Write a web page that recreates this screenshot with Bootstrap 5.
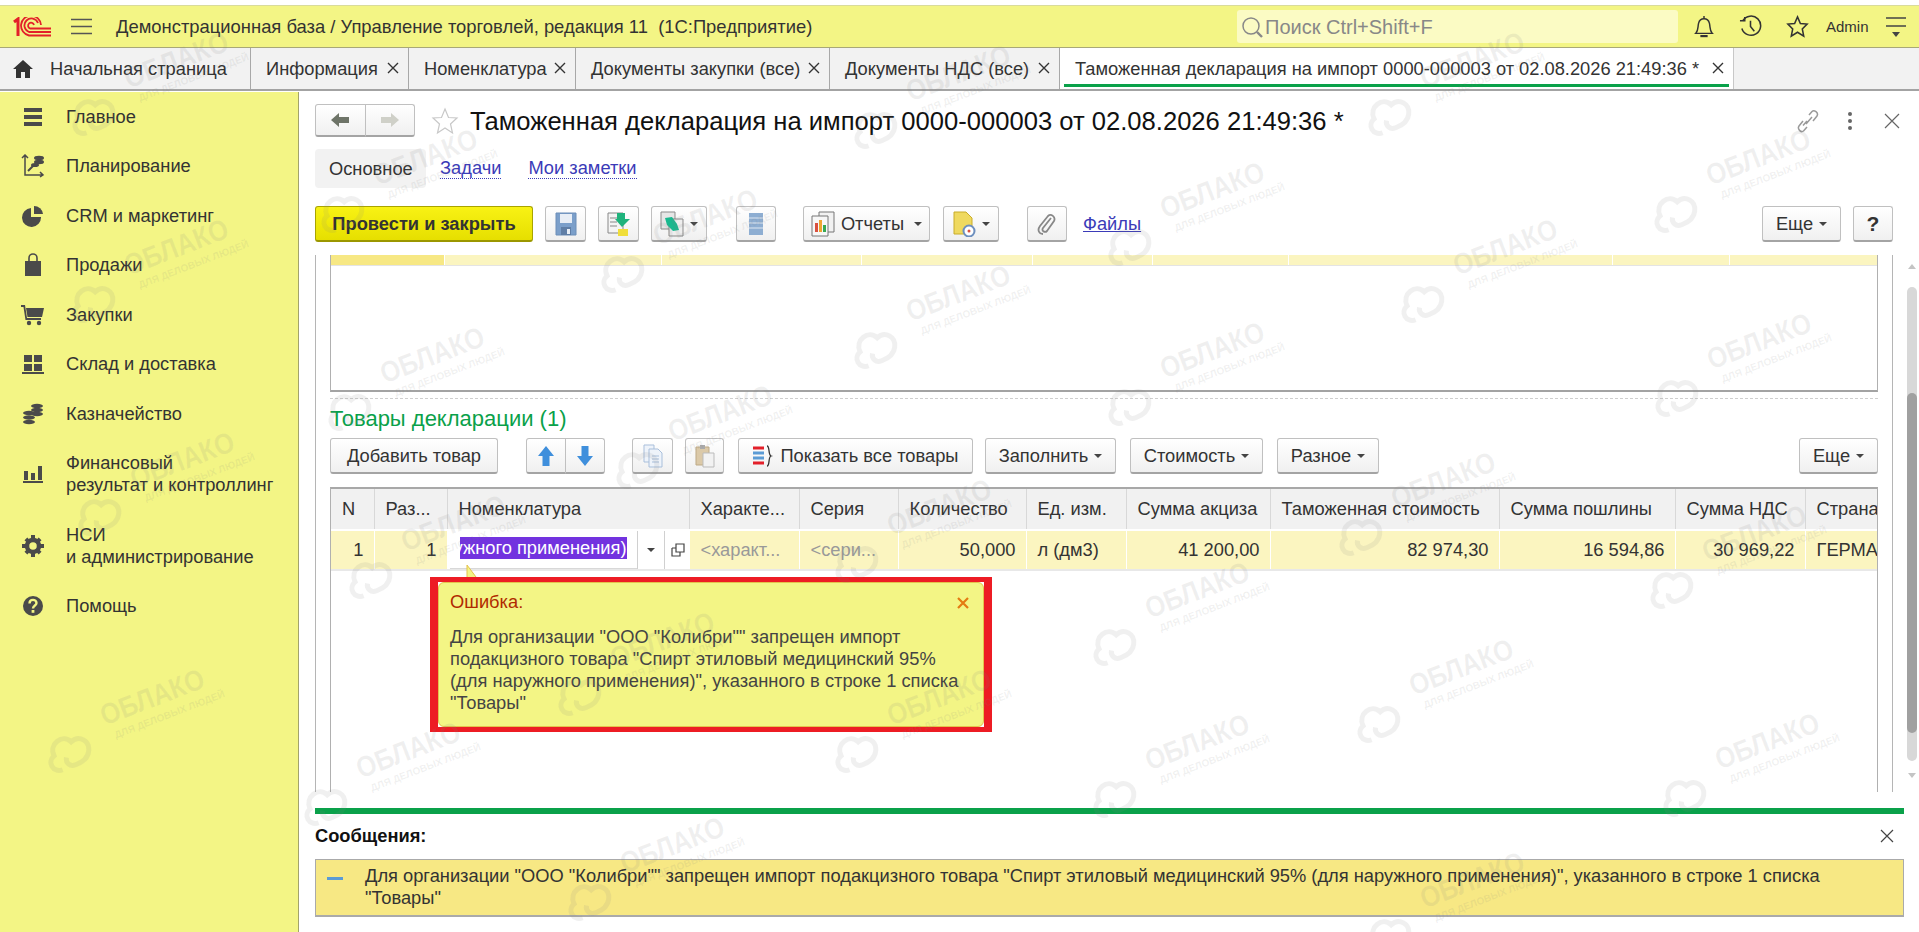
<!DOCTYPE html>
<html lang="ru">
<head>
<meta charset="utf-8">
<title>Таможенная декларация</title>
<link href="https://cdn.jsdelivr.net/npm/bootstrap@5.3.0/dist/css/bootstrap.min.css" rel="stylesheet">
<style>
html,body{height:100%;margin:0;overflow:hidden;background:#fff}
body{font-family:"Liberation Sans",Arial,sans-serif;font-size:18.3px;color:#333;line-height:22px}
.app-shell{width:1919px;height:932px;position:relative;overflow:hidden}
.top-bar{height:43px;margin-top:5px;background:#f3f585;border-top:1px solid #d9db9c;border-bottom:1px solid #a8a878;padding-left:13px}
.top-title{margin-left:24px;white-space:pre;font-size:18.4px}
.search-box{width:441px;height:33px;background:#fbfbc4;border-radius:3px;color:#888;margin-left:auto;padding-left:4px;gap:2px;font-size:20px}
.top-right{width:241px;flex:none;padding-left:2px}
.top-ico{width:47px;justify-content:center}
.admin-name{font-size:15px;width:41px;margin-left:5px;flex:none}
.tab-strip{height:43px;background:#f2f2f2;border-bottom:2px solid #a3a3a3}
.tab-item{height:41px;border-right:1px solid #a8a8a8;padding-left:15px;position:relative;white-space:nowrap}
.tab-x{position:absolute;right:7px;top:12px;width:16px;height:16px;stroke:#333}
.tab-on{background:#fff;border-right:1px solid #c8c8c8}
.tab-on::after{content:"";position:absolute;left:4px;right:4px;bottom:2px;height:3px;background:#0aa14a}
.side-nav{width:299px;flex:none;background:#f3f585;border-right:1px solid #a3a36a;height:840px;margin-top:1px}
.side-item{padding:13.75px 0;display:flex;align-items:center;white-space:nowrap}
.side-ico{width:66px;height:22px;flex:none;display:flex;justify-content:center;align-items:center}
.main-area{padding-left:16px;flex:1;min-width:0;height:841px}
.doc-title{font-size:25.6px;color:#111;margin-left:11px;white-space:nowrap}
.nav-pair{width:100px;height:33px}
.soft-btn{--bs-btn-padding-y:0;--bs-btn-padding-x:0;--bs-btn-font-size:18.3px;--bs-btn-color:#333;--bs-btn-border-radius:3px;--bs-btn-line-height:22px;display:inline-flex;align-items:center;justify-content:center;gap:6px;height:36px;background:linear-gradient(#fff,#f0f0f0);border:1px solid #c0c0c0;border-bottom:2px solid #a4a4a4;white-space:nowrap;flex:none}
.w-ico{width:41px}
.h-nav{height:33px}
.caret-d{display:inline-block;width:0;height:0;border:4px solid transparent;border-top:4px solid #444;border-bottom:0}
.go-btn{background:linear-gradient(#f8f214,#e6df00);border:1px solid #a9a400;border-bottom:2px solid #9b9700;font-weight:700;width:218px;color:#333}
.form-tab{background:#f2f2f2;border-radius:4px;height:39px;width:111px;padding-left:14px;display:flex;align-items:center}
.dot-link{color:#3b3bb8;border-bottom:1px dotted #3b3bb8;line-height:20px;margin-left:14px}
.file-link{color:#3b3bb8;text-decoration:underline;margin-left:4px}
.page-frame{width:1578px;height:537px;border-left:1px solid #b5b5b5;border-right:1px solid #b5b5b5;padding:0 14px;flex:none}
.upper-box{height:137px;border:1px solid #b0b0b0;border-top:0;border-bottom:2px solid #a3a3a3}
.upper-row{height:10px;display:flex;gap:1px}
.upper-row i{display:block;background:#fbf5c0;height:10px}
.upper-row i.hot{background:#f7e884}
.upper-line{height:1px;background:#e4e4e4}
.dash-line{border-bottom:1px dashed #cfcfcf;margin-top:6px}
.green-title{color:#0aa14a;font-size:22px;margin-top:9px;line-height:22px}
.grid-wrap{height:305px;margin-top:13px;border-left:1px solid #b0b0b0;border-right:1px solid #b0b0b0;border-top:2px solid #a8a8a8;overflow:hidden;position:relative}
.doc-grid{table-layout:fixed;width:1559px;margin:0;--bs-table-bg:transparent;--bs-table-color:#333;color:#333;font-size:18.3px}
.doc-grid th,.doc-grid td{padding:0 0 0 11px;white-space:nowrap;overflow:hidden;border-right:1px solid #fff;vertical-align:middle;line-height:22px}
.doc-grid th{height:41px;font-weight:400;background:#f1f1f1;border-right:1px solid #d8d8d8;border-bottom:1px solid #d8d8d8}
.doc-grid td{height:38px;background:#fbf5c0;border-top:2px solid #fff;border-bottom:2px solid #e8e8e8;box-sizing:content-box}
.doc-grid td.num{text-align:right;padding:0 10px 0 0}
.doc-grid td.hint{color:#999}
.doc-grid td.edit{background:#fff;padding:0;position:relative}
.edit-in{display:flex;height:38px;align-items:stretch}
.edit-txt{width:187px;margin-left:2px;border-bottom:1px solid #d8d8d8;padding:6px 0 0 10px;overflow:hidden;flex:none}
.sel-txt{display:flex;justify-content:flex-end;width:167px;height:22px;background:#7233df;color:#fff;overflow:hidden;white-space:nowrap}
.sel-txt span{flex:none}
.edit-btn{width:27px;border-left:1px solid #d0d0d0;display:flex;align-items:center;justify-content:center;flex:none}
.tip-ring{position:absolute;left:99px;top:88px;width:562px;height:155px;border:solid #ed1c24;border-width:5px 8px;background:transparent}
.tip-card{height:145px;background:#f3f585;border:1px solid #e4c24c;border-radius:6px;padding:8px 11px;color:#444;position:relative;white-space:nowrap}
.tip-head{color:#b02a00}
.tip-close{position:absolute;right:14px;top:14px}
.tip-tail{position:absolute;left:134px;top:76px;width:18px;height:22px}
.scroll-col{width:10px;margin-left:14px;height:537px;position:relative;flex:none}
.scroll-arrow{position:absolute;left:1px;width:0;height:0;border:4px solid transparent}
.scroll-up{top:9px;border-bottom:5px solid #c4c4c4;border-top:0}
.scroll-dn{top:518px;border-top:5px solid #c4c4c4;border-bottom:0}
.scroll-track{position:absolute;left:0;top:32px;width:10px;height:474px;background:#d8d8d8;border-radius:5px}
.scroll-thumb{position:absolute;left:0;top:138px;width:10px;height:340px;background:#a0a0a0;border-radius:5px}
.green-bar{height:6px;background:#0aa14a;width:1589px;margin-top:16px}
.msg-head{width:1589px;margin-top:11px;font-weight:700;color:#111}
.msg-box{width:1589px;height:58px;margin-top:12px;background:#f7e884;border:1px solid #aaa;border-bottom-width:2px;padding:5px 40px 0 49px;position:relative;color:#333}
.msg-dash{position:absolute;left:11px;top:17px;width:16px;height:3px;background:#5b9bd5}
.mark-layer{position:absolute;inset:0;pointer-events:none;overflow:hidden;z-index:5}
.wm-item{position:absolute;width:0;height:0}
.wm-body{position:absolute;left:-130px;top:-20px;width:300px;display:flex;align-items:flex-start;gap:18px;transform:rotate(-21deg);transform-origin:130px 20px;color:rgba(128,128,128,.12)}
.wm-body svg{margin-top:16px;flex:none}
.wm-name{font-size:29px;line-height:34px;font-weight:700;display:block;transform:scaleX(.88);transform-origin:left}
.wm-sub{font-size:10px;line-height:11px;font-weight:700;display:block;margin-left:6px;white-space:nowrap}
</style>
</head>
<body>
<div class="app-shell d-flex flex-column">
  <header class="top-bar d-flex align-items-center">
    <svg width="38" height="20" viewBox="0 0 38 20" class="flex-shrink-0" fill="none" stroke="#e3202a"><path d="M1 5 5 2V19" stroke-width="3"/><path d="M25 6A7 7 0 1 0 16 15H38" stroke-width="1.800"/><path d="M28 8A10 10 0 1 0 16 18.500H38" stroke-width="1.800"/><path d="M21 8A3 3 0 1 0 17 11.500H38" stroke-width="1.800"/></svg>
    <svg width="21" height="17" viewBox="0 0 21 17" stroke="#555" stroke-width="1.600" class="flex-shrink-0" style="margin-left:20px"><path d="M0 1.500H21M0 8.500H21M0 15.500H21"/></svg>
    <div class="top-title">Демонстрационная база / Управление торговлей, редакция 11  (1С:Предприятие)</div>
    <div class="search-box d-flex align-items-center">
      <svg width="22" height="22" viewBox="0 0 22 22" fill="none" stroke="#888" stroke-width="1.500"><circle cx="10" cy="10" r="8"/><path d="M16 16 21 21" stroke-width="2.400"/></svg>
      <span>Поиск Ctrl+Shift+F</span>
    </div>
    <div class="top-right d-flex align-items-center">
      <span class="d-flex top-ico"><svg width="20" height="24" viewBox="0 0 22 26" fill="none" stroke="#333" stroke-width="1.600"><path d="M2 20C5 17 4 13 5 9 6 5 9 4 11 4S16 5 17 9C18 13 17 17 20 20Z"/><path d="M11 1V4"/><path d="M7 23H15" stroke-width="2.400"/></svg></span>
      <span class="d-flex top-ico"><svg width="23" height="23" viewBox="0 0 24 24" fill="none" stroke="#333" stroke-width="1.600"><path d="M4 6A10 10 0 1 1 3 14"/><path d="M1 6H6V2"/><path d="M12 6V12L16 17"/></svg></span>
      <span class="d-flex top-ico"><svg width="23" height="23" viewBox="0 0 24 24" fill="none" stroke="#333" stroke-width="1.600"><path d="M12 2 15 9 22 9.500 17 14.500 18.500 22 12 18 5.500 22 7 14.500 2 9.500 9 9Z"/></svg></span>
      <span class="admin-name">Admin</span>
      <svg width="22" height="24" viewBox="0 0 22 24" stroke="#444" stroke-width="1.600" class="flex-shrink-0" style="margin-left:18px"><path d="M1 3H21M1 11H21"/><path d="M7 17H15L11 22Z" fill="#444" stroke="none"/></svg>
    </div>
  </header>

  <nav class="tab-strip d-flex">
    <div class="tab-item d-flex align-items-center" style="width:251px">
      <svg width="20" height="20" viewBox="0 0 20 20" fill="#333" class="flex-shrink-0" style="margin:0 17px 0 -2px"><path d="M10 1 0 10H3V19H8V13H12V19H17V10H20Z"/></svg><span>Начальная страница</span>
    </div>
    <div class="tab-item d-flex align-items-center" style="width:158px"><span>Информация</span><svg class="tab-x" viewBox="0 0 16 16" stroke-width="1.400"><path d="M3 3 13 13M13 3 3 13"/></svg></div>
    <div class="tab-item d-flex align-items-center" style="width:167px"><span>Номенклатура</span><svg class="tab-x" viewBox="0 0 16 16" stroke-width="1.400"><path d="M3 3 13 13M13 3 3 13"/></svg></div>
    <div class="tab-item d-flex align-items-center" style="width:254px"><span>Документы закупки (все)</span><svg class="tab-x" viewBox="0 0 16 16" stroke-width="1.400"><path d="M3 3 13 13M13 3 3 13"/></svg></div>
    <div class="tab-item d-flex align-items-center" style="width:230px"><span>Документы НДС (все)</span><svg class="tab-x" viewBox="0 0 16 16" stroke-width="1.400"><path d="M3 3 13 13M13 3 3 13"/></svg></div>
    <div class="tab-item tab-on d-flex align-items-center" style="width:674px"><span>Таможенная декларация на импорт 0000-000003 от 02.08.2026 21:49:36 *</span><svg class="tab-x" viewBox="0 0 16 16" stroke-width="1.400" style="right:7px"><path d="M3 3 13 13M13 3 3 13"/></svg></div>
  </nav>

  <div class="d-flex">
    <aside class="side-nav">
      <div class="side-item"><span class="side-ico"><svg width="20" height="20" viewBox="0 0 20 20" fill="#4a4a4a"><path d="M1 1H19V5H1ZM1 8H19V12H1ZM1 15H19V19H1Z"/></svg></span>Главное</div>
      <div class="side-item"><span class="side-ico"><svg width="24" height="24" viewBox="0 0 24 24" fill="none" stroke="#4a4a4a" stroke-width="1.500"><path d="M4 1V21H22M1 4 4 1 7 4M19 18 22 21 19 23"/><path d="M7 17 13 11" stroke-width="2"/><ellipse cx="18" cy="4" rx="5" ry="2.200" fill="#4a4a4a" stroke="none"/><ellipse cx="18" cy="8" rx="5" ry="2.200" fill="#4a4a4a" stroke="none"/><ellipse cx="14" cy="11" rx="4" ry="2" fill="#4a4a4a" stroke="none"/></svg></span>Планирование</div>
      <div class="side-item"><span class="side-ico"><svg width="22" height="22" viewBox="0 0 22 22" fill="#4a4a4a"><path d="M9 3V12H19A9.500 9.500 0 1 1 9 3Z"/><path d="M12 1A9 9 0 0 1 21 9H12Z"/></svg></span>CRM и маркетинг</div>
      <div class="side-item"><span class="side-ico"><svg width="20" height="24" viewBox="0 0 20 24" fill="#4a4a4a"><path d="M2 8H18V23H2Z"/><path d="M6 11V5A4 4 0 0 1 14 5V11" fill="none" stroke="#4a4a4a" stroke-width="1.600"/></svg></span>Продажи</div>
      <div class="side-item"><span class="side-ico"><svg width="24" height="22" viewBox="0 0 24 22" fill="#4a4a4a"><path d="M0 1H4L6 14H20V16H4.500L2.500 3H0Z"/><path d="M5 4H23L21 13H6.500Z"/><circle cx="8" cy="19" r="2.200"/><circle cx="18" cy="19" r="2.200"/></svg></span>Закупки</div>
      <div class="side-item"><span class="side-ico"><svg width="22" height="20" viewBox="0 0 22 20" fill="#4a4a4a"><path d="M2 1H10V8H2ZM12 1H20V8H12ZM2 10H10V17H2ZM12 10H20V17H12ZM0 18H22V20H0Z"/></svg></span>Склад и доставка</div>
      <div class="side-item"><span class="side-ico"><svg width="22" height="22" viewBox="0 0 22 22" fill="#4a4a4a"><ellipse cx="15" cy="3" rx="6" ry="2.200"/><ellipse cx="15" cy="7" rx="6" ry="2.200"/><ellipse cx="15" cy="11" rx="6" ry="2.200"/><ellipse cx="7" cy="10" rx="6" ry="2.200"/><ellipse cx="7" cy="14.500" rx="6" ry="2.200"/><ellipse cx="7" cy="19" rx="6" ry="2.200"/></svg></span>Казначейство</div>
      <div class="side-item"><span class="side-ico"><svg width="20" height="18" viewBox="0 0 20 18" fill="#4a4a4a"><path d="M1 6H5V15H1ZM8 8H12V15H8ZM15 1H19V15H15ZM0 16H20V18H0Z"/></svg></span><span>Финансовый<br>результат и контроллинг</span></div>
      <div class="side-item"><span class="side-ico"><svg width="22" height="22" viewBox="0 0 22 22"><circle cx="11" cy="11" r="6" fill="none" stroke="#4a4a4a" stroke-width="4.500"/><path d="M9 0H13V4H9ZM9 18H13V22H9ZM0 9H4V13H0ZM18 9H22V13H18ZM2.500 5.300 5.300 2.500 8 5.200 5.200 8ZM16.700 19.500 19.500 16.700 16.800 14 14 16.800ZM2.500 16.700 5.300 19.500 8 16.800 5.200 14ZM16.700 2.500 19.500 5.300 16.800 8 14 5.200Z" fill="#4a4a4a"/></svg></span><span>НСИ<br>и администрирование</span></div>
      <div class="side-item"><span class="side-ico"><svg width="22" height="22" viewBox="0 0 22 22"><circle cx="11" cy="11" r="10" fill="#4a4a4a"/><path d="M7.500 8.500C7.500 3.500 14.500 4 14.500 8 14.500 10.500 11 10.500 11 13.500" fill="none" stroke="#f3f585" stroke-width="2.400"/><rect x="9.600" y="15" width="2.800" height="2.800" fill="#f3f585"/></svg></span>Помощь</div>
    </aside>

    <main class="main-area d-flex flex-column">
      <div class="d-flex align-items-center" style="width:1589px;margin-top:13px">
        <div class="btn-group nav-pair">
          <button type="button" class="btn soft-btn h-nav w-50"><svg width="20" height="16" viewBox="0 0 20 16" fill="#6e7468"><path d="M1 8 9 1V5H19V11H9V15Z"/></svg></button>
          <button type="button" class="btn soft-btn h-nav w-50"><svg width="20" height="16" viewBox="0 0 20 16" fill="#cfd0c8"><path d="M19 8 11 1V5H1V11H11V15Z"/></svg></button>
        </div>
        <svg width="28" height="28" viewBox="0 0 28 28" fill="none" stroke="#c8c8c8" stroke-width="1.200" class="ms-3"><path d="M14 2 17.500 10.500 26 11 19.500 17 21.500 26 14 21 6.500 26 8.500 17 2 11 10.500 10.500Z"/></svg>
        <div class="doc-title">Таможенная декларация на импорт 0000-000003 от 02.08.2026 21:49:36 *</div>
        <div class="d-flex align-items-center ms-auto" style="gap:28px">
          <svg width="22" height="24" viewBox="0 0 22 24" fill="none" stroke="#9a9a9a" stroke-width="1.500"><path d="M9 15 15 8M12 6 15 2.500C17 0.500 22 3.500 20 7L16 12M10 12 6 16.500M10 18 6.500 22C4 24 0 20 2 17L6 12"/></svg>
          <svg width="6" height="20" viewBox="0 0 6 20" fill="#666"><circle cx="3" cy="3" r="2"/><circle cx="3" cy="10" r="2"/><circle cx="3" cy="17" r="2"/></svg>
          <svg width="22" height="22" viewBox="0 0 22 22" stroke="#666" stroke-width="1.200" style="margin-right:1px"><path d="M4 4 18 18M18 4 4 18"/></svg>
        </div>
      </div>

      <div class="d-flex align-items-center" style="margin-top:12px">
        <div class="form-tab">Основное</div>
        <span class="dot-link">Задачи</span>
        <span class="dot-link" style="margin-left:27px">Мои заметки</span>
      </div>

      <div class="d-flex align-items-center" style="margin-top:18px;width:1578px;gap:12px">
        <button type="button" class="btn soft-btn go-btn">Провести и закрыть</button>
        <button type="button" class="btn soft-btn w-ico"><svg width="22" height="24" viewBox="0 0 22 24"><path d="M1 1H21V23H1Z" fill="#7b9fca" stroke="#6c8eb8"/><path d="M5 2H17V11H5Z" fill="#e8eef6"/><path d="M6 15H16V23H6Z" fill="#5f7ea6"/><path d="M12 17H15V22H12Z" fill="#e8eef6"/></svg></button>
        <button type="button" class="btn soft-btn w-ico"><svg width="24" height="26" viewBox="0 0 24 26"><path d="M1 2H16V22H1Z" fill="#f4f4f4" stroke="#888"/><path d="M3 7H12M3 11H10M3 15H10" stroke="#888"/><path d="M10 2H18V8H23L15 16 8 8H10Z" fill="#1fb37c"/><path d="M11 18H21V25H11Z" fill="#f0de3a"/></svg></button>
        <button type="button" class="btn soft-btn" style="width:56px"><svg width="24" height="26" viewBox="0 0 24 26"><path d="M1 1H15V18H1Z" fill="#e6e6e6" stroke="#8b8b8b"/><path d="M9 8H23V25H9Z" fill="#eee" stroke="#8b8b8b"/><path d="M5 7 12 6 17 13 19 19 13 20 7 14Z" fill="#19b98f"/></svg><span class="caret-d"></span></button>
        <button type="button" class="btn soft-btn" style="width:40px;margin-left:17px"><svg width="16" height="24" viewBox="0 0 16 24"><path d="M1 1H15V23H1Z" fill="#8eaed2"/><path d="M1 6H15M1 11H15M1 16H15" stroke="#dfe8f2"/></svg></button>
        <button type="button" class="btn soft-btn" style="width:127px;margin-left:15px"><svg width="24" height="26" viewBox="0 0 24 26"><path d="M8 1H23V21H8Z" fill="#f2f2f2" stroke="#777"/><path d="M1 5H17V25H1Z" fill="#f7f7f7" stroke="#777"/><path d="M4 12H7V21H4Z" fill="#d9503f"/><path d="M8 9H11V21H8Z" fill="#f0a430"/><path d="M12 14H15V21H12Z" fill="#37a853"/></svg><span>Отчеты</span><span class="caret-d ms-1"></span></button>
        <button type="button" class="btn soft-btn" style="width:56px;margin-left:1px"><svg width="24" height="26" viewBox="0 0 24 26"><path d="M2 1H14L20 7V23H2Z" fill="#efd95f" stroke="#c8ac2a"/><circle cx="17" cy="20" r="5.500" fill="#fff" stroke="#6d8fbe" stroke-width="2"/><circle cx="17" cy="20" r="1.500" fill="#d9503f"/></svg><span class="caret-d"></span></button>
        <button type="button" class="btn soft-btn" style="width:40px;margin-left:16px"><svg width="20" height="24" viewBox="0 0 20 24" fill="none" stroke="#888" stroke-width="1.800"><path d="M14 6 6 16C4 19 8 21 10 19L17 9C19 5 14 1 11 4L3 14C0 18 2 22 6 22"/></svg></button>
        <span class="file-link">Файлы</span>
        <button type="button" class="btn soft-btn ms-auto" style="width:79px">Еще <span class="caret-d"></span></button>
        <button type="button" class="btn soft-btn" style="width:40px;font-size:21px;font-weight:700">?</button>
      </div>

      <div class="d-flex" style="margin-top:13px">
        <section class="page-frame">
          <div class="upper-box">
            <div class="upper-row">
              <i class="hot" style="width:113px"></i><i style="width:217px"></i><i style="width:199px"></i><i style="width:170px"></i><i style="width:120px"></i><i style="width:135px"></i><i style="width:323px"></i><i style="width:117px"></i><i style="width:147px"></i>
            </div>
            <div class="upper-line"></div>
          </div>
          <div class="dash-line"></div>
          <div class="green-title">Товары декларации (1)</div>
          <div class="d-flex align-items-center" style="margin-top:8px;gap:12px">
            <button type="button" class="btn soft-btn" style="width:168px">Добавить товар</button>
            <div class="btn-group" style="margin-left:16px;width:79px">
              <button type="button" class="btn soft-btn w-50"><svg width="18" height="22" viewBox="0 0 18 22" fill="#3f8fdc"><path d="M9 1 17 11H12.500V21H5.500V11H1Z"/></svg></button>
              <button type="button" class="btn soft-btn w-50"><svg width="18" height="22" viewBox="0 0 18 22" fill="#3f8fdc"><path d="M9 21 17 11H12.500V1H5.500V11H1Z"/></svg></button>
            </div>
            <button type="button" class="btn soft-btn w-ico" style="margin-left:15px"><svg width="20" height="24" viewBox="0 0 20 24" fill="#eef3fa" stroke="#a9bfdb"><path d="M1 1H11V18H1Z"/><path d="M6 5H15L19 9V23H6Z"/><path d="M9 12H16M9 15H16M9 18H16"/></svg></button>
            <button type="button" class="btn soft-btn" style="width:39px"><svg width="20" height="24" viewBox="0 0 20 24"><path d="M1 3H14V21H1Z" fill="#dbc9a8" stroke="#bda985"/><path d="M5 1H10V5H5Z" fill="#aaa"/><path d="M8 9H19V23H8Z" fill="#f2f2f2" stroke="#bbb"/></svg></button>
            <button type="button" class="btn soft-btn" style="width:235px;margin-left:2px"><svg width="22" height="24" viewBox="0 0 22 24" fill="none"><path d="M1 4H12" stroke="#e3202a" stroke-width="3"/><path d="M1 9H12M1 14H12" stroke="#5b9bd5" stroke-width="3"/><path d="M1 19H12" stroke="#e3202a" stroke-width="3"/><path d="M15 2C18 2 16 11 19 12 16 13 18 22 15 22" stroke="#333" stroke-width="1.300"/></svg><span>Показать все товары</span></button>
            <button type="button" class="btn soft-btn" style="width:131px">Заполнить <span class="caret-d"></span></button>
            <button type="button" class="btn soft-btn" style="width:133px;margin-left:2px">Стоимость <span class="caret-d"></span></button>
            <button type="button" class="btn soft-btn" style="width:102px;margin-left:2px">Разное <span class="caret-d"></span></button>
            <button type="button" class="btn soft-btn ms-auto" style="width:79px">Еще <span class="caret-d"></span></button>
          </div>
          <div class="grid-wrap">
            <table class="table table-borderless doc-grid">
              <colgroup><col style="width:43px"><col style="width:73px"><col style="width:242px"><col style="width:110px"><col style="width:99px"><col style="width:128px"><col style="width:100px"><col style="width:144px"><col style="width:229px"><col style="width:176px"><col style="width:130px"><col style="width:85px"></colgroup>
              <thead><tr><th>N</th><th>Раз...</th><th>Номенклатура</th><th>Характе...</th><th>Серия</th><th>Количество</th><th>Ед. изм.</th><th>Сумма акциза</th><th>Таможенная стоимость</th><th>Сумма пошлины</th><th>Сумма НДС</th><th>Страна</th></tr></thead>
              <tbody><tr>
                <td class="num">1</td><td class="num">1</td>
                <td class="edit"><div class="edit-in"><div class="edit-txt"><div class="sel-txt"><span>ужного применения)</span></div></div><div class="edit-btn"><span class="caret-d"></span></div><div class="edit-btn"><svg width="14" height="14" viewBox="0 0 14 14" fill="none" stroke="#444" stroke-width="1.200"><path d="M5 1H13V9H5ZM1 5H5M1 5V13H9V9"/></svg></div></div></td>
                <td class="hint">&lt;характ...</td><td class="hint">&lt;сери...</td><td class="num">50,000</td><td>л (дм3)</td><td class="num">41 200,00</td><td class="num">82 974,30</td><td class="num">16 594,86</td><td class="num">30 969,22</td><td>ГЕРМАНИЯ</td>
              </tr></tbody>
            </table>
            <svg class="tip-tail" viewBox="0 0 18 22"><path d="M2 0 17 20H2Z" fill="#f3f585" stroke="#e4c24c"/></svg>
            <div class="tip-ring">
              <div class="tip-card">
                <div class="tip-head">Ошибка:</div>
                <svg class="tip-close" width="12" height="12" viewBox="0 0 12 12" stroke="#e47a12" stroke-width="2.200"><path d="M1 1 11 11M11 1 1 11"/></svg>
                <div style="margin-top:13px">Для организации "ООО "Колибри"" запрещен импорт<br>подакцизного товара "Спирт этиловый медицинский 95%<br>(для наружного применения)", указанного в строке 1 списка<br>"Товары"</div>
              </div>
            </div>
          </div>
        </section>
        <div class="scroll-col">
          <span class="scroll-arrow scroll-up"></span>
          <div class="scroll-track"></div>
          <div class="scroll-thumb"></div>
          <span class="scroll-arrow scroll-dn"></span>
        </div>
      </div>

      <div class="green-bar"></div>
      <div class="msg-head d-flex align-items-center justify-content-between"><span>Сообщения:</span><svg width="18" height="18" viewBox="0 0 18 18" stroke="#444" stroke-width="1.200" class="me-2"><path d="M3 3 15 15M15 3 3 15"/></svg></div>
      <div class="msg-box"><span class="msg-dash"></span>Для организации "ООО "Колибри"" запрещен импорт подакцизного товара "Спирт этиловый медицинский 95% (для наружного применения)", указанного в строке 1 списка<br>"Товары"</div>
    </main>
  </div>

  <div class="mark-layer" id="marks"></div>
</div>
<script src="https://cdn.jsdelivr.net/npm/bootstrap@5.3.0/dist/js/bootstrap.bundle.min.js"></script>
<script>
var spots=[[184,60],[184,247],[190,460],[160,697],[433,157],[440,355],[461,523],[416,750],[713,217],[728,413],[670,640],[680,845],[966,73],[966,293],[947,507],[947,697],[1220,190],[1220,350],[1205,590],[1205,742],[1480,60],[1513,247],[1451,480],[1469,667],[1480,880],[1766,157],[1767,341],[1762,533],[1775,741]];
var holder=document.getElementById('marks');
spots.forEach(function(p){
  var d=document.createElement('div');d.className='wm-item';d.style.left=p[0]+'px';d.style.top=p[1]+'px';
  d.innerHTML='<div class="wm-body"><svg width="50" height="42" viewBox="0 0 50 42" fill="none" stroke="currentColor" stroke-width="5"><path d="M13 37C3 37 1 24 10 21 9 8 26 3 31 14 41 10 49 20 44 29 41 35 34 37 27 37 21 37 18 32 21 27"/></svg><div><span class="wm-name">ОБЛАКО</span><span class="wm-sub">ДЛЯ ДЕЛОВЫХ ЛЮДЕЙ</span></div></div>';
  holder.appendChild(d);
});
</script>
</body>
</html>
